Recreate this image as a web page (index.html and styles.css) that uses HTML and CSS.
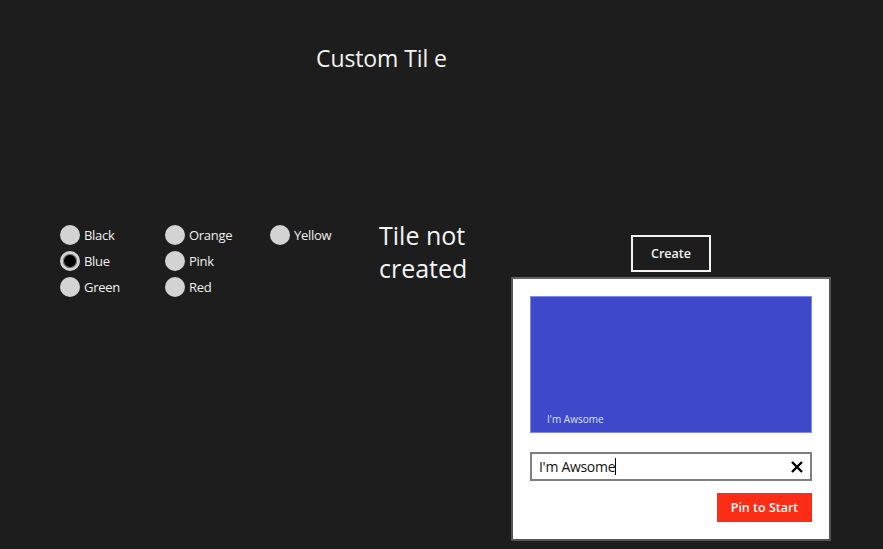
FILE: index.html
```html
<!DOCTYPE html>
<html>
<head>
<meta charset="utf-8">
<link rel="stylesheet" href="styles.css">
</head>
<body>
<div class="page">
  <h1 class="title">Custom Til e</h1>
  <div class="main">
    <div class="colors">
      <label class="radio"><span class="dot"></span>Black</label>
      <label class="radio"><span class="dot"></span>Orange</label>
      <label class="radio"><span class="dot"></span>Yellow</label>
      <label class="radio"><span class="dot checked"></span>Blue</label>
      <label class="radio"><span class="dot"></span>Pink</label>
      <span></span>
      <label class="radio"><span class="dot"></span>Green</label>
      <label class="radio"><span class="dot"></span>Red</label>
    </div>
    <div class="status">Tile not<br>created</div>
    <div class="actions">
      <button class="create">Create</button>
      <div class="flyout">
        <div class="tile"><span class="tile-label">I'm Awsome</span></div>
        <div class="input">
          <span class="input-text">I'm Awsome</span><span class="caret"></span>
          <svg class="clear" width="14" height="14" viewBox="0 0 14 14"><path d="M2 2 L12 12 M12 2 L2 12" stroke="#000" stroke-width="2.4" fill="none"/></svg>
        </div>
        <div class="pin-row"><button class="pin">Pin to Start</button></div>
      </div>
    </div>
  </div>
</div>
</body>
</html>
```
FILE: styles.css
```css
html, body {
  margin: 0;
  padding: 0;
  background: #1d1d1d;
  height: 100%;
}
body {
  font-family: "Open Sans", "Noto Sans", sans-serif;
  color: #f0f0f0;
  overflow: hidden;
}
.page {
  width: 883px;
  height: 549px;
  position: relative;
}
.title {
  margin: 0;
  padding: 42px 0 0 316px;
  font-size: 23px;
  font-weight: 400;
  line-height: 32px;
  letter-spacing: -0.1px;
  color: #f4f4f4;
}
.main {
  display: flex;
  margin-top: 151px;
  padding-left: 60px;
}
.colors {
  display: grid;
  grid-template-columns: 105px 105px 105px;
  grid-auto-rows: 26px;
  width: 315px;
  margin-top: -3px;
}
.radio {
  display: flex;
  align-items: center;
  gap: 4px;
  font-size: 13px;
  letter-spacing: -0.3px;
  color: #f0f0f0;
}
.dot {
  width: 20px;
  height: 20px;
  border-radius: 50%;
  background: #d3d3d3;
  box-sizing: border-box;
}
.dot.checked {
  background: #000;
  border: 3px solid #d3d3d3;
  box-shadow: inset 0 0 0 1px #777;
}
.status {
  margin-left: 4px;
  width: 252px;
  font-size: 25px;
  line-height: 33px;
  margin-top: -6px;
  color: #f4f4f4;
}
.actions {
  position: relative;
  margin-top: 10px;
}
.create {
  width: 80px;
  height: 37px;
  background: transparent;
  border: 2px solid #f4f4f4;
  color: #f4f4f4;
  font-family: "Open Sans", sans-serif;
  font-size: 12.5px;
  font-weight: 600;
  padding: 0;
}
.flyout {
  position: absolute;
  left: -120px;
  top: 42px;
  width: 320px;
  height: 264px;
  box-sizing: border-box;
  background: #fff;
  border: 2px solid #555;
  border-top-color: #666;
  padding: 17px 17px 0 17px;
  display: flex;
  flex-direction: column;
}
.tile {
  height: 137px;
  background: #3e48cb;
  border: 1px solid #8289e0;
  box-sizing: border-box;
  display: flex;
  align-items: flex-end;
  padding: 0 0 6px 16px;
}
.tile-label {
  font-size: 10px;
  color: #dfe1f6;
}
.input {
  margin-top: 19px;
  height: 29px;
  border: 2px solid #7f7f7f;
  box-sizing: border-box;
  display: flex;
  align-items: center;
  padding: 0 6px 0 7px;
  color: #111;
}
.input-text {
  font-size: 14px;
  letter-spacing: -0.3px;
}
.caret {
  width: 1px;
  height: 17px;
  background: #000;
}
.clear {
  margin-left: auto;
}
.pin-row {
  display: flex;
  justify-content: flex-end;
  margin-top: 12px;
}
.pin {
  width: 95px;
  height: 29px;
  background: #fb2d14;
  border: none;
  color: #fff;
  font-family: "Open Sans", sans-serif;
  font-size: 12.5px;
  font-weight: 600;
  padding: 0;
}
```
